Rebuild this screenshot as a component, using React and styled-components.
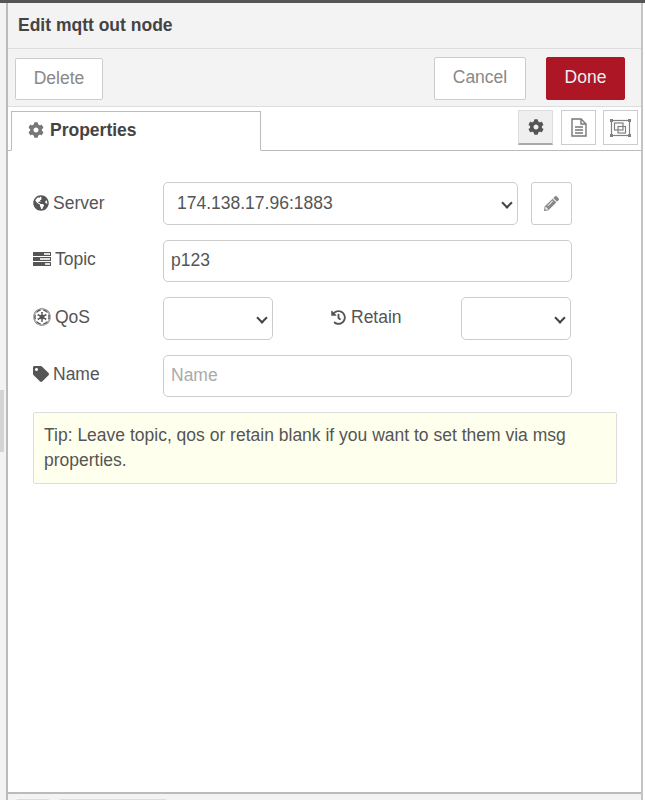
import React from "react";
import styled, { createGlobalStyle } from "styled-components";
import { FaCog, FaGlobeAmericas, FaHistory, FaTag, FaPencilAlt, FaEmpire } from "react-icons/fa";

const Global = createGlobalStyle`
  html, body { margin: 0; padding: 0; background: #fff; }
  * { box-sizing: border-box; }
  body { font-family: "Liberation Sans", Arial, sans-serif; color: #555; font-size: 17.5px; }
`;
const Page = styled.div`
  width: 645px; height: 800px; overflow: hidden; display: flex; flex-direction: column;
`;
const TopLine = styled.div`height: 3px; background: #555; flex: none;`;
const Main = styled.div`display: flex; flex: 1; min-height: 0;`;
const Gutter = styled.div`
  width: 6px; flex: none; background: #f3f3f3; padding-top: 387px;
`;
const Handle = styled.div`width: 4px; height: 62px; background: #d4d4d4;`;
const Tray = styled.div`
  width: 637px; flex: none; display: flex; flex-direction: column;
  border-left: 2px solid #bbb; border-right: 2px solid #c4c4c4;
`;
const Title = styled.div`
  height: 46px; flex: none; background: #f3f3f3; border-bottom: 1px solid #ddd;
  padding: 12px 0 0 10px; font-weight: bold; font-size: 17.5px; line-height: 21px; color: #444;
`;
const Toolbar = styled.div`
  height: 58px; flex: none; background: #f3f3f3; border-bottom: 1px solid #ddd;
  display: flex; align-items: flex-start; padding: 9px 16px 0 7px;
`;
const Btn = styled.button`
  font: 17.5px "Liberation Sans", Arial, sans-serif;
  height: ${p => p.$h || 42}px; width: ${p => p.$w}px; padding: 0 0 2px; border-radius: 2px;
  background: ${p => (p.$primary ? "#ad1625" : "#fff")};
  color: ${p => (p.$primary ? "#eee" : "#888")};
  border: 1px solid ${p => (p.$primary ? "#ad1625" : "#ccc")};
  margin-left: ${p => p.$ml || 0}px;
  margin-top: ${p => p.$mt || 0}px;
`;
const Spacer = styled.div`flex: 1;`;
const TabBar = styled.div`
  height: 44px; flex: none; display: flex; align-items: flex-end; padding-left: 3px;
  border-bottom: 1px solid #bbb; background: #fff;
`;
const Tab = styled.div`
  width: 250px; height: 40px; margin-bottom: -1px; background: #fff;
  border: 1px solid #bbb; border-bottom: 1px solid #fff;
  padding: 8px 0 0 16px; display: flex; align-items: flex-start; gap: 6px;
  font-weight: bold; font-size: 17.5px; line-height: 21px; color: #444;
  svg { color: #777; margin-top: 2px; }
`;
const TabTools = styled.div`
  margin-left: auto; display: flex; gap: 8px; padding: 0 3px 5px 0; align-self: flex-end;
`;
const ToolBtn = styled.div`
  width: 35px; height: 35px; display: flex; align-items: center; justify-content: center;
  margin-left: ${p => p.$ml || 0}px;
  background: ${p => (p.$active ? "#efefef" : "#fff")};
  border: 1px solid ${p => (p.$active ? "#ddd" : "#ccc")};
  border-bottom: ${p => (p.$active ? "2px solid #aaa" : "1px solid #ccc")};
  color: ${p => (p.$active ? "#555" : "#777")};
`;
const Body = styled.div`
  flex: 1; background: #fff; padding: 31px 24px 0 25px; display: flex; flex-direction: column;
`;
const Row = styled.div`
  display: flex; align-items: flex-start; margin-bottom: ${p => p.$mb ?? 15}px;
  height: ${p => p.$h || 42}px;
`;
const Label = styled.label`
  width: ${p => p.$w || 130}px; flex: none; display: flex; align-items: center; gap: ${p => p.$gap ?? 4}px;
  height: 42px; font-size: 17.5px; color: #555; margin-left: ${p => p.$ml || 0}px;
  padding-bottom: ${p => p.$pb ?? 0}px;
  svg { flex: none; color: #555; }
`;
const SelectWrap = styled.div`
  position: relative; width: ${p => p.$w}px; height: 43px; flex: none;
  &::after {
    content: ""; position: absolute; right: 7px; top: 17px; width: 6px; height: 6px;
    border-right: 2px solid #444; border-bottom: 2px solid #444; transform: rotate(45deg);
    pointer-events: none;
  }
`;
const SelectBox = styled.div`
  width: 100%; height: 43px; border: 1px solid #ccc; border-radius: 5px; background: #fff;
  padding-left: 13px; line-height: 40px; font-size: 17.5px; color: #555;
`;
const Input = styled.input`
  display: block; width: 409px; height: 42px; border: 1px solid #ccc; border-radius: 5px; background: #fff;
  padding: 0 7px 1px; font: 17.5px "Liberation Sans", Arial, sans-serif; color: #555; outline: none;
  &::placeholder { color: #aaa; opacity: 1; }
`;
const EditBtn = styled.div`
  width: 41px; height: 43px; margin-left: 13px; border: 1px solid #ccc; border-radius: 3px;
  display: flex; align-items: center; justify-content: center; color: #888; flex: none;
`;
const Tip = styled.div`
  width: 584px; height: 72px; background: #ffe; border: 1px solid #ddd; border-radius: 2px;
  padding: 10px 10px; font-size: 17.5px; line-height: 25px; color: #555;
`;
const Footer = styled.div`
  height: 8px; flex: none; background: #f3f3f3; border-top: 2px solid #bbb;
  display: flex; gap: 9px; padding: 5px 0 0 8px; overflow: hidden;
`;
const Stub = styled.div`
  width: ${p => p.$w}px; height: 8px; background: #ddd; border-radius: 2px 2px 0 0;
`;

const TopicIcon = () => (
  <svg width="18" height="14" viewBox="0 0 18 14">
    <rect x="0" y="0" width="18" height="4" fill="#555" />
    <rect x="0" y="5" width="18" height="4" fill="#555" />
    <rect x="0" y="10" width="18" height="4" fill="#555" />
    <rect x="11" y="1.2" width="6" height="1.6" fill="#fff" />
    <rect x="7" y="6.2" width="10" height="1.6" fill="#fff" />
    <rect x="12" y="11.2" width="5" height="1.6" fill="#fff" />
  </svg>
);
const DocIcon = () => (
  <svg width="16" height="19" viewBox="0 0 16 19" fill="none" stroke="#777" strokeWidth="1.4">
    <path d="M1 1h9l5 5v12H1z" />
    <path d="M10 1v5h5" />
    <path d="M4 9h8M4 12h8M4 15h8" />
  </svg>
);
const FrameIcon = () => (
  <svg width="21" height="18" viewBox="0 0 21 18" fill="none" stroke="#808080" strokeWidth="1.2">
    <rect x="1.5" y="1.5" width="18" height="15" />
    <rect x="4.5" y="4" width="8.5" height="7" />
    <rect x="8" y="7.5" width="7.5" height="6.5" />
    <g fill="#808080" stroke="none">
      <rect x="0" y="0" width="3" height="3" /><rect x="18" y="0" width="3" height="3" />
      <rect x="0" y="15" width="3" height="3" /><rect x="18" y="15" width="3" height="3" />
    </g>
  </svg>
);

export default function App() {
  return (
    <Page>
      <Global />
      <TopLine />
      <Main>
        <Gutter><Handle /></Gutter>
        <Tray>
          <Title>Edit mqtt out node</Title>
          <Toolbar>
            <Btn $w={88}>Delete</Btn>
            <Spacer />
            <Btn $w={92} $mt={-1} $h={43}>Cancel</Btn>
            <Btn $w={79} $ml={20} $mt={-1} $h={43} $primary>Done</Btn>
          </Toolbar>
          <TabBar>
            <Tab><FaCog size={16} /> Properties</Tab>
            <TabTools>
              <ToolBtn $active><FaCog size={16} /></ToolBtn>
              <ToolBtn><DocIcon /></ToolBtn>
              <ToolBtn $ml={-1}><FrameIcon /></ToolBtn>
            </TabTools>
          </TabBar>
          <Body>
            <Row $mb={16}>
              <Label><FaGlobeAmericas size={16} /> Server</Label>
              <SelectWrap $w={355}><SelectBox>174.138.17.96:1883</SelectBox></SelectWrap>
              <EditBtn><FaPencilAlt size={15} /></EditBtn>
            </Row>
            <Row $mb={15}>
              <Label $pb={4}><TopicIcon /> Topic</Label>
              <Input defaultValue="p123" />
            </Row>
            <Row $mb={16}>
              <Label $gap={4} $pb={2}><FaEmpire size={18} /> QoS</Label>
              <SelectWrap $w={110}><SelectBox /></SelectWrap>
              <Label $ml={58} $pb={2} $gap={5}><FaHistory size={15} /> Retain</Label>
              <SelectWrap $w={110}><SelectBox /></SelectWrap>
            </Row>
            <Row $mb={15}>
              <Label $pb={4}><FaTag size={16} /> Name</Label>
              <Input placeholder="Name" />
            </Row>
            <Tip>Tip: Leave topic, qos or retain blank if you want to set them via msg properties.</Tip>
          </Body>
          <Footer><Stub $w={34} /><Stub $w={108} /></Footer>
        </Tray>
      </Main>
    </Page>
  );
}
